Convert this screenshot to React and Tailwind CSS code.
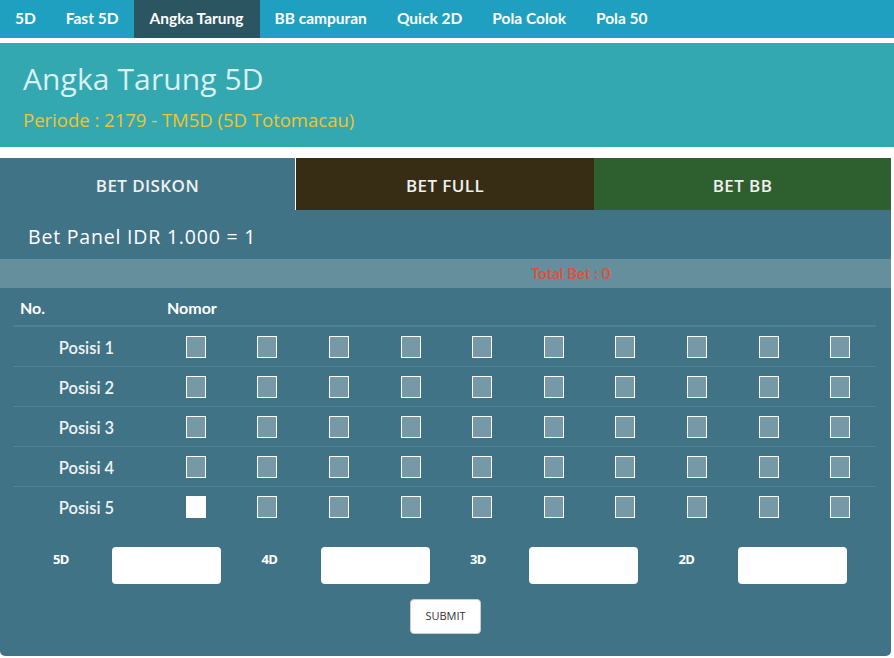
import React, { useState } from "react";

const menu = ["5D", "Fast 5D", "Angka Tarung", "BB campuran", "Quick 2D", "Pola Colok", "Pola 50"];
const digits = [0, 1, 2, 3, 4, 5, 6, 7, 8, 9];
const positions = [1, 2, 3, 4, 5];
const betTypes = ["5D", "4D", "3D", "2D"];

export default function App() {
  const [tab, setTab] = useState("diskon");
  const [checked, setChecked] = useState({ "5-0": true });

  const toggle = (key) => {
    setChecked({ ...checked, [key]: !checked[key] });
  };

  return (
    <div className="w-[894px] min-h-[658px] bg-white font-['Lato',sans-serif]">
      {/* Top menu */}
      <nav className="flex h-[38px] bg-[#1fa0c0]">
        {menu.map((item) => (
          <a
            key={item}
            className={
              item === "Angka Tarung"
                ? "flex items-center px-4 text-[15.5px] font-bold text-white bg-[#2b5561]"
                : "flex items-center px-[15px] text-[15.5px] font-bold text-white"
            }
          >
            {item}
          </a>
        ))}
      </nav>

      {/* Title */}
      <div className="mt-[5px] h-[104px] bg-[#33a8b1] pl-[23px] pt-[16px] font-['Open_Sans',sans-serif]">
        <h1 className="text-[30px] leading-[40px] tracking-[0.1px] text-[#d8f0f0]">Angka Tarung 5D</h1>
        <p className="mt-[9px] text-[18.5px] leading-[24px] text-[#f6c12a]">
          Periode : 2179 - TM5D (5D Totomacau)
        </p>
      </div>

      {/* Bet panel */}
      <div className="mt-[11px] w-[891px] bg-[#417386] rounded-b-[5px] pb-[22px]">
        <div className="flex h-[52px] font-['Open_Sans',sans-serif] text-[17px] font-semibold tracking-[0.4px] text-[#f0f0f0]">
          <button
            onClick={() => setTab("diskon")}
            className="w-[296px] h-[52px] pt-[3px] flex items-center justify-center border-r border-white bg-[#417386]"
          >
            BET DISKON
          </button>
          <button
            onClick={() => setTab("full")}
            className="w-[298px] h-[52px] pt-[3px] flex items-center justify-center bg-[#362d14]"
          >
            BET FULL
          </button>
          <button
            onClick={() => setTab("bb")}
            className="w-[297px] h-[52px] pt-[3px] flex items-center justify-center bg-[#2e5f2e]"
          >
            BET BB
          </button>
        </div>

        <div className="h-[49px] flex items-center pl-[28px] pt-[5px] font-['Open_Sans',sans-serif] text-[19.5px] tracking-[0.8px] text-white">
          Bet Panel IDR 1.000 = 1
        </div>

        <div className="h-[29px] flex items-center bg-[#658f9d] pl-[531px] text-[15px] font-bold text-[#e2503c]">
          Total Bet : 0
        </div>

        {/* Number table */}
        <div className="mx-[13px] w-[863px]">
          <div className="flex h-[39px] items-center pt-[3px] border-b-2 border-[#4f8193] text-[16px] font-bold text-white">
            <div className="w-[147px] pl-[7px]">No.</div>
            <div className="pl-[7px]">Nomor</div>
          </div>
          {positions.map((p) => (
            <div
              key={p}
              className={
                p === 5
                  ? "flex h-[40px] items-center"
                  : "flex h-[40px] items-center border-b border-[#52829a]"
              }
            >
              <div className="w-[147px] pt-[3px] text-center text-[16.5px] font-semibold text-[#eef4f6]">
                Posisi {p}
              </div>
              <div className="flex flex-1">
                {digits.map((d) => {
                  const key = `${p}-${d}`;
                  return (
                    <div key={d} className="flex flex-1 justify-center">
                      <button
                        onClick={() => toggle(key)}
                        className={
                          checked[key]
                            ? "w-[20px] h-[22px] border border-white bg-white"
                            : "w-[20px] h-[22px] border border-white bg-[#7599a6]"
                        }
                      />
                    </div>
                  );
                })}
              </div>
            </div>
          ))}
        </div>

        {/* Amount inputs */}
        <div className="mt-[20px] ml-[13px] grid w-[834px] grid-cols-4">
          {betTypes.map((t) => (
            <div key={t} className="flex items-start">
              <label className="w-[99px] pl-[40px] pt-[3px] font-['Open_Sans',sans-serif] text-[13px] font-bold tracking-tighter text-white">
                {t}
              </label>
              <input
                type="text"
                className="w-[109px] h-[37px] rounded-[4px] bg-white outline-none"
              />
            </div>
          ))}
        </div>

        <div className="mt-[15px] flex justify-center">
          <button className="w-[71px] h-[35px] rounded-[4px] border border-[#cccccc] bg-white font-['Open_Sans',sans-serif] text-[11px] text-[#333333]">
            SUBMIT
          </button>
        </div>
      </div>
    </div>
  );
}
